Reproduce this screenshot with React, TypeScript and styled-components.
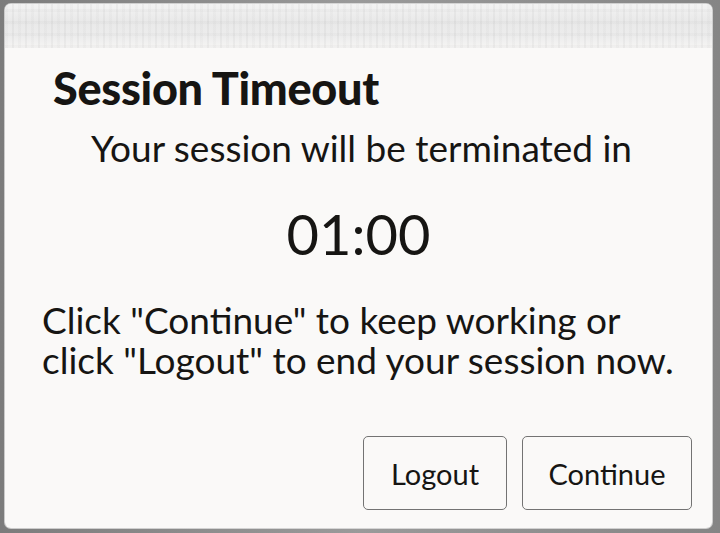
import React from 'react';
import styled, { createGlobalStyle } from 'styled-components';

const GlobalStyle = createGlobalStyle`
  html, body {
    margin: 0;
    padding: 0;
    background: #8a8a8a;
  }
  body {
    font-family: Lato, "Open Sans", "Liberation Sans", sans-serif;
    color: #161513;
  }
`;

const Backdrop = styled.div`
  width: 720px;
  height: 533px;
  padding: 4px 8px 5px 5px;
  box-sizing: border-box;
  background: linear-gradient(90deg, #7c7c7c 0, #9a9a9a 50%, #858585 100%);
`;

const Dialog = styled.div`
  width: 707px;
  height: 524px;
  display: flex;
  flex-direction: column;
  background: #faf9f8;
  border-radius: 6px;
  overflow: hidden;
  box-shadow: 0 0 0 1px rgba(255, 255, 255, 0.6);
`;

const HeaderBand = styled.div`
  height: 44px;
  flex-shrink: 0;
  background-color: #eeeeee;
  background-image:
    repeating-linear-gradient(90deg, rgba(0, 0, 0, 0.02) 0 3px, transparent 3px 7px, rgba(0, 0, 0, 0.035) 7px 9px, transparent 9px 13px),
    repeating-linear-gradient(180deg, transparent 0 5px, rgba(0, 0, 0, 0.02) 5px 8px, transparent 8px 12px),
    linear-gradient(180deg, #f3f3f3 0, #e9e9e9 40%, #ededed 75%, #f6f5f4 100%);
`;

const Title = styled.h1`
  margin: 14px 0 0 48px;
  font-size: 45px;
  line-height: 52px;
  font-weight: 900;
  letter-spacing: -0.3px;
`;

const Lead = styled.p`
  margin: 11px 0 0;
  text-align: center;
  font-size: 37px;
  line-height: 46px;
  padding-left: 6px;
`;

const Timer = styled.div`
  margin-top: 31px;
  text-align: center;
  font-size: 56px;
  line-height: 64px;
`;

const Message = styled.p`
  margin: 34px 0 0 37px;
  font-size: 37px;
  line-height: 40px;
`;

const Actions = styled.div`
  margin-top: auto;
  display: flex;
  justify-content: flex-end;
  gap: 15px;
  padding: 0 20px 18px 0;
`;

const Button = styled.button<{ width: number }>`
  width: ${p => p.width}px;
  height: 74px;
  background: #faf9f8;
  border: 1px solid #737373;
  border-radius: 5px;
  font-family: Lato, "Open Sans", "Liberation Sans", sans-serif;
  font-size: 29px;
  color: #161513;
  padding: 0;
  cursor: pointer;
`;

export default function App() {
  return (
    <>
      <GlobalStyle />
      <Backdrop>
        <Dialog>
          <HeaderBand />
          <Title>Session Timeout</Title>
          <Lead>Your session will be terminated in</Lead>
          <Timer>01:00</Timer>
          <Message>
            Click "Continue" to keep working or
            <br />
            click "Logout" to end your session now.
          </Message>
          <Actions>
            <Button width={144}>Logout</Button>
            <Button width={170}>Continue</Button>
          </Actions>
        </Dialog>
      </Backdrop>
    </>
  );
}
